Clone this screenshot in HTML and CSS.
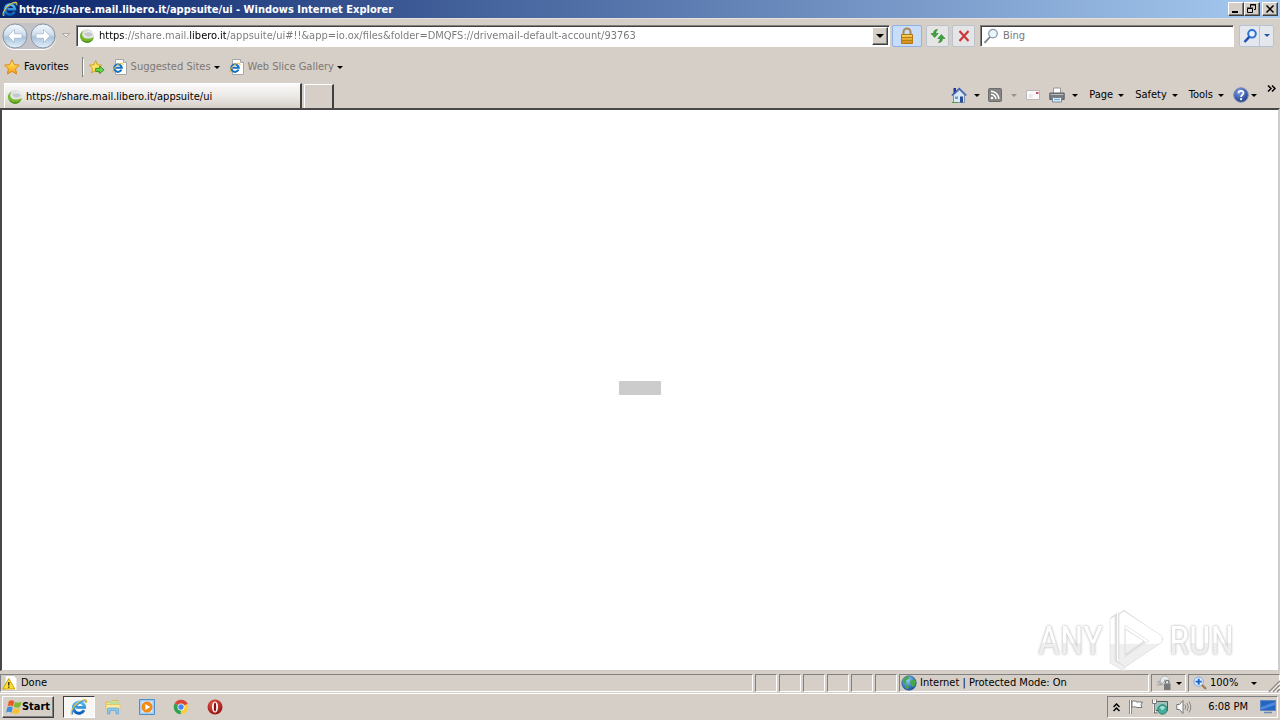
FILE: index.html
```html
<!DOCTYPE html>
<html lang="en">
<head>
<meta charset="utf-8">
<title>https://share.mail.libero.it/appsuite/ui - Windows Internet Explorer</title>
<link rel="stylesheet" href="styles.css">
</head>
<body>
<svg class="defs" aria-hidden="true">
  <defs>
    <linearGradient id="gGlass" x1="0" y1="0" x2="0" y2="1"><stop offset="0" stop-color="#f4f8fc"/><stop offset=".45" stop-color="#cfdeec"/><stop offset=".55" stop-color="#a9c3dc"/><stop offset="1" stop-color="#e4f2fc"/></linearGradient>
    <linearGradient id="gStar" x1="0" y1="0" x2="0" y2="1"><stop offset="0" stop-color="#fff3a0"/><stop offset=".5" stop-color="#fdc73a"/><stop offset="1" stop-color="#f39a1c"/></linearGradient>
    <linearGradient id="gIe" x1="0" y1="0" x2="0" y2="1"><stop offset="0" stop-color="#5cc4f4"/><stop offset="1" stop-color="#0a5cb8"/></linearGradient>
    <linearGradient id="gLock" x1="0" y1="0" x2="0" y2="1"><stop offset="0" stop-color="#fbd25c"/><stop offset="1" stop-color="#d08a10"/></linearGradient>
    <linearGradient id="gPlay" gradientUnits="userSpaceOnUse" x1="0" y1="2" x2="0" y2="60"><stop offset="0" stop-color="#fff"/><stop offset=".54" stop-color="#fff"/><stop offset=".56" stop-color="#efefef"/><stop offset="1" stop-color="#efefef"/></linearGradient>
    <radialGradient id="gHelp" cx=".4" cy=".3" r=".8"><stop offset="0" stop-color="#7f9fe8"/><stop offset="1" stop-color="#12307f"/></radialGradient>
    <radialGradient id="gGlobe" cx=".4" cy=".3" r=".8"><stop offset="0" stop-color="#8fd0f8"/><stop offset="1" stop-color="#0a3f96"/></radialGradient>
    <radialGradient id="gOpera" cx=".4" cy=".3" r=".8"><stop offset="0" stop-color="#e85a50"/><stop offset="1" stop-color="#8e0a0a"/></radialGradient>
    <symbol id="ie" viewBox="0 0 16 16"><path d="M12.500 10.800A5 5 0 1 1 13 8.300H5.500" fill="none" stroke="url(#gIe)" stroke-width="2.600"/><path d="M2 14.800C-.8 13.400 3 7 8 3.600 12.500.6 15.800.6 14.600 4.200" fill="none" stroke="#f3c33b" stroke-width="1.200"/><path d="M2.800 14.600C.8 13 4 7.600 8.400 4.400 12 2 14.600 1.800 14 4.200" fill="none" stroke="#2f8fdc"/></symbol>
    <symbol id="iepage" viewBox="0 0 16 16"><path d="M3.500 .5h8l3 3v12h-11z" fill="#fff" stroke="#a6a6a6"/><path d="M11.500.5v3h3" fill="#ddd" stroke="#a6a6a6"/><path d="M9.500 10.600A3.800 3.800 0 1 1 9.800 8.700H4" fill="none" stroke="#1771c4" stroke-width="2"/><path d="M1.500 13.500C-.5 12 3.500 6 8 4.500c2-.5 3.500-.2 3 1.500" fill="none" stroke="#e8b62c"/></symbol>
    <symbol id="libero" viewBox="0 0 16 16"><circle cx="8" cy="8" r="7" fill="#e3e3e3"/><path d="M1 6.500A7.100 7.100 0 0 0 15 9C10 11.500 5 11 3.500 8 2.600 6 3.500 4 5 2.300A7 7 0 0 0 1 6.500z" fill="#76b82a"/><path d="M2 11a7 7 0 0 0 12 .5c-4 2.500-8 2.500-12-.5z" fill="#4b8a1e"/><path d="M6 4c2-1.500 6-2 8 1.500-1 2.500-4 3.500-6.500 2.500C5.500 7 5 5.500 6 4z" fill="#c4c8ca"/><path d="M6.500 4.500C9 3 12 3.500 14 5.500" stroke="#fff" fill="none"/></symbol>
    <symbol id="star" viewBox="0 0 16 16"><path d="M8 .8l2.200 4.800 5.200.6-3.800 3.600 1 5.200L8 12.400 3.400 15l1-5.200L.6 6.200l5.200-.6z" fill="url(#gStar)" stroke="#d98a18"/></symbol>
    <symbol id="addstar" viewBox="0 0 18 16"><path d="M7.500.8l2 4.600 5 .6-3.600 3.500 1 5-4.400-2.500L3 14.600l1-5L.6 6l5-.6z" fill="#fde25e" stroke="#cf9a18"/><path d="M7.500 9.500h4.500V7l5 4.200-5 4.200V13H7.500z" fill="#6bd44a" stroke="#2f8f20"/></symbol>
    <symbol id="lock" viewBox="0 0 16 18"><path d="M4.500 8V5a3.500 3.500 0 0 1 7 0v3" fill="none" stroke="#a8885a" stroke-width="2"/><path d="M2.500 7.500h11v9h-11z" fill="url(#gLock)" stroke="#b27a12"/><path d="M3 10.500h10M3 13.500h10" stroke="#b87c10"/></symbol>
    <symbol id="refresh" viewBox="0 0 16 16"><path d="M7.500 1.500C5 1.500 3.500 3 3.500 5.500H1l3.600 4 3.600-4H5.800c0-1.500.6-2.500 1.700-4z" fill="#3fa43c" stroke="#27802a" stroke-width=".6"/><path d="M8.500 14.500c2.500 0 4-1.500 4-4H15l-3.600-4-3.600 4h2.400c0 1.500-.6 2.500-1.700 4z" fill="#3fa43c" stroke="#27802a" stroke-width=".6"/></symbol>
    <symbol id="stop" viewBox="0 0 16 16"><path d="M3.500 3l9 10M12.500 3l-9 10" stroke="#c9383c" stroke-width="2.200"/></symbol>
    <symbol id="glass" viewBox="0 0 16 16"><circle cx="10" cy="5.600" r="4.300" fill="#eaf4fb" stroke="#8497a8" stroke-width="1.200"/><path d="M7 9l-5.500 5.800" stroke="#7a7f86" stroke-width="1.800"/></symbol>
    <symbol id="bluglass" viewBox="0 0 16 16"><circle cx="10" cy="5.800" r="3.800" fill="#e9f3ff" stroke="#2f6fd0" stroke-width="2"/><path d="M7.300 8.800L2.500 14" stroke="#1f4fae" stroke-width="2.500"/></symbol>
    <symbol id="home" viewBox="0 0 16 16"><path d="M2.500 1h2.500v6H2.500z" fill="#2c2f9a"/><path d="M2.500 8L8.500 3l5 5v7.500h-11z" fill="#dce8f4" stroke="#7d91ac"/><path d="M.8 8.500l7.500-7 7 7" fill="none" stroke="#3d63b5" stroke-width="1.600"/><path d="M9 9.500h3v6H9z" fill="#2a4e94"/><path d="M4 9.500h3V12H4z" fill="#5ba3d2"/><path d="M1 15.500h5" stroke="#4e9d43"/></symbol>
    <symbol id="rss" viewBox="0 0 14 14"><rect x=".5" y=".5" width="13" height="13" rx="1" fill="#858585" stroke="#6d6d6d"/><circle cx="4" cy="10" r="1.300" fill="#fff"/><path d="M3 6.200A4.800 4.800 0 0 1 7.800 11M3 3.200A7.800 7.800 0 0 1 10.800 11" fill="none" stroke="#fff" stroke-width="1.500"/></symbol>
    <symbol id="mail" viewBox="0 0 14 10"><path d="M.5.500h13v9H.5z" fill="#fbfafa" stroke="#bcb7b7"/><path d="M10 2h2.500v2H10z" fill="#c94b66"/><path d="M2.500 5h5M2.500 7h4" stroke="#dcd9d9"/></symbol>
    <symbol id="printer" viewBox="0 0 16 16"><path d="M4.500 1h7v6h-7z" fill="#fff" stroke="#999"/><path d="M.8 6h14.400v6.500H.8z" fill="#777b80" stroke="#5d6165"/><path d="M1.500 7.500h13" stroke="#b9bdc1"/><path d="M3.500 10.500h9v4.500h-9z" fill="#eef7ff" stroke="#7a8490"/><path d="M5 12.500h6" stroke="#6fb3e6" stroke-width="1.500"/></symbol>
    <symbol id="help" viewBox="0 0 16 16"><circle cx="8" cy="8" r="7.300" fill="url(#gHelp)" stroke="#7f90b5"/><path d="M5.500 6.200C5.500 3.200 10.600 3.300 10.500 6c0 1.800-2.400 2-2.400 4" fill="none" stroke="#fff" stroke-width="1.700"/><circle cx="8.100" cy="12.200" r="1.100" fill="#fff"/></symbol>
    <symbol id="warn" viewBox="0 0 16 16"><path d="M3 .5h9l3 3v12H3z" fill="#fff" stroke="#c8c8c8"/><path d="M6.800 3.500l6 10.500H.8z" fill="#ffe02e" stroke="#c9a100"/><path d="M6.800 7v3.500M6.800 11.500v1.300" stroke="#222" stroke-width="1.300"/></symbol>
    <symbol id="globe" viewBox="0 0 16 16"><circle cx="8" cy="8" r="7.300" fill="url(#gGlobe)" stroke="#2d5e98" stroke-width=".6"/><path d="M3 4c1-2 3-3 5-2.500L7.500 4 5 5.500 5.500 8 3.500 9 1.500 7zM9 6l4-2 1.800 3-1 4-2.300 1L9.500 9zM5 10l3 1-1 3.500-3-2z" fill="#46a848"/></symbol>
    <symbol id="ghost" viewBox="0 0 16 16"><path d="M.5 7L7 3.500v7z" fill="#aeb0b2"/><circle cx="9" cy="5.500" r="4.500" fill="#e8eaec" stroke="#b2b4b6"/><path d="M1 9.500c4 1.500 7-1 8-5" stroke="#999" fill="none"/><path d="M8 8.500h6.500V15H8z" fill="#77797b"/><path d="M9.500 8.500V7a1.700 1.700 0 0 1 3.400 0v1.500" fill="none" stroke="#77797b" stroke-width="1.300"/></symbol>
    <symbol id="zoomin" viewBox="0 0 14 14"><circle cx="5.700" cy="5.700" r="4.700" fill="#d8ebff" stroke="#7fa9da"/><path d="M5.700 2.700v6M2.700 5.700h6" stroke="#1d5fc0" stroke-width="1.800"/><path d="M9 9l4 4" stroke="#a47a4a" stroke-width="2.200"/></symbol>
    <symbol id="grip" viewBox="0 0 12 12"><path d="M1 12L12 1M5 12l7-7M9 12l3-3" stroke="#8a8580" stroke-width="1.500"/><path d="M2.500 12L12 2.500M6.500 12L12 6.500" stroke="#fff"/></symbol>
    <symbol id="windows" viewBox="0 0 16 16"><path d="M2.800 2.200c1.800-1.200 3.600-1.200 5.400 0L7 7.500c-1.800-1.200-3.600-1.200-5.400 0z" fill="#ea5a24"/><path d="M9 2.700c1.800 1.200 3.800 1.200 6.500 0l-1.300 5.100c-2.200 1.200-4.400 1.200-6.400 0z" fill="#7dba2f"/><path d="M1.300 8.500c1.800-1.200 3.600-1.200 5.400 0l-1.200 5.200c-1.800-1.200-3.600-1.200-5.400 0z" fill="#3c8fd8"/><path d="M7.500 9c1.800 1.200 3.800 1.200 6.500 0l-1.300 5.100c-2.200 1.200-4.400 1.200-6.400 0z" fill="#f7c22c"/></symbol>
    <symbol id="folder" viewBox="0 0 16 16"><path d="M1 3h5l1-1.500h6V9H1z" fill="#f6e08a" stroke="#d9bc58"/><path d="M5 2.500h8.500V8H5z" fill="#bce0a0"/><path d="M1 5.500h14V10H1z" fill="#fbe9a4" stroke="#e2c869"/><path d="M2.500 15v-4.500c0-1 .5-1.500 1.500-1.500h8c1 0 1.500.500 1.500 1.500V15h-2.500v-3.500H5V15z" fill="#8cc8ec" stroke="#5ba3d2" stroke-width=".7"/></symbol>
    <symbol id="wmp" viewBox="0 0 16 16"><path d="M.5.500h15v15H.5z" fill="#a5cdf0" stroke="#4d8ecb"/><path d="M2.500 2.500h11v11h-11z" fill="#d9ebfa"/><circle cx="8" cy="8" r="5.500" fill="#f28a18"/><path d="M6.300 5l5 3-5 3z" fill="#fff"/></symbol>
    <symbol id="chrome" viewBox="0 0 16 16"><path d="M8 8L1.700 4.300A7.300 7.300 0 0 1 14.500 4.700z" fill="#dc4437"/><path d="M8 8l6.500-3.300A7.300 7.300 0 0 1 7.700 15.300z" fill="#fccd3a"/><path d="M8 8l-.3 7.300A7.300 7.300 0 0 1 1.700 4.300z" fill="#30a150"/><path d="M8 4.500h6.400" stroke="#dc4437" stroke-width="1.500"/><circle cx="8" cy="8" r="3.500" fill="#fff"/><circle cx="8" cy="8" r="2.700" fill="#4285f4"/></symbol>
    <symbol id="opera" viewBox="0 0 16 16"><circle cx="8" cy="8" r="7.500" fill="url(#gOpera)"/><ellipse cx="8" cy="8" rx="3" ry="5.500" fill="#fff"/><ellipse cx="8" cy="8" rx="1.200" ry="4.500" fill="#8e1010"/></symbol>
    <symbol id="flag" viewBox="0 0 16 16"><path d="M2.500 1v14" stroke="#777" stroke-width="2.600"/><path d="M2.500 1v14" stroke="#fff"/><path d="M4 2.500c2-1 3.500-.5 5 .5h5.500l-1.500 2.500 1 3H9C7.500 7.500 6 7.500 4 8.500z" fill="#fff" stroke="#777"/></symbol>
    <symbol id="net" viewBox="0 0 16 16"><path d="M3.500 2.500h12v9h-12z" fill="#9cc4bd" stroke="#555"/><path d="M1 1v3h3V1M2.500 4v9" fill="none" stroke="#fff" stroke-width="2.200"/><path d="M.5.500v4h4v-4M2.500 5v9h3" fill="none" stroke="#555" stroke-width=".8"/><circle cx="10.500" cy="10.500" r="4.700" fill="#42ae9c" stroke="#24796c"/><path d="M8 8c2-2 4-1 5 .5L11 11l-2-.5z" fill="#a6dfd4"/></symbol>
    <symbol id="speaker" viewBox="0 0 16 16"><path d="M.8 5.500h2.700l3.500-4v13l-3.500-4H.8z" fill="#fff" stroke="#777"/><path d="M9 5.500q1.500 2.500 0 5M11 4q2.600 4 0 8M13 2.500q3.600 5.500 0 11" fill="none" stroke="#888"/></symbol>
    <symbol id="screen" viewBox="0 0 16 14"><path d="M.5.500h15v10H.5z" fill="#2766c0" stroke="#5d87c0"/><path d="M1 7l14-5v3L1 10z" fill="#4b8ade"/><path d="M4 12.500h8" stroke="#6a8bb6" stroke-width="1.500"/></symbol>
  </defs>
</svg>

<header class="titlebar">
  <svg class="i16"><use href="#ie"/></svg>
  <h1 class="title">https://share.mail.libero.it/appsuite/ui - Windows Internet Explorer</h1>
  <div class="winbtns">
    <button class="winbtn" aria-label="Minimize"><svg viewBox="0 0 12 10"><path d="M2 8h6" stroke="#000" stroke-width="2"/></svg></button>
    <button class="winbtn" aria-label="Restore"><svg viewBox="0 0 12 10"><path d="M4.500 3.500V.500h5v5H8M4 1h6M1.500 4.500h5v4h-5zM1 4h6" fill="none" stroke="#000"/></svg></button>
    <button class="winbtn winclose" aria-label="Close"><svg viewBox="0 0 12 10"><path d="M2.500 1.500l7 7M9.500 1.500l-7 7" stroke="#000" stroke-width="1.500"/></svg></button>
  </div>
</header>

<nav class="navbar" aria-label="Navigation">
  <div class="travel">
    <button class="round" aria-label="Back"><svg viewBox="0 0 26 26"><circle cx="13" cy="13" r="12" fill="url(#gGlass)" stroke="#8796a6"/><path d="M12.500 6.500L6 13l6.500 6.500v-4.300H20v-4.400h-7.500z" fill="#fff" stroke="#9fb4c8" stroke-width=".7"/></svg></button>
    <button class="round" aria-label="Forward"><svg viewBox="0 0 26 26"><circle cx="13" cy="13" r="12" fill="url(#gGlass)" stroke="#8796a6"/><path d="M13.500 6.500L20 13l-6.500 6.500v-4.300H6v-4.400h7.500z" fill="#fff" stroke="#9fb4c8" stroke-width=".7"/></svg></button>
  </div>
  <button class="recent" aria-label="Recent pages"><svg viewBox="0 0 8 5"><path d="M.5.500h7L4 4z" fill="#eee" stroke="#aaa6a0"/></svg></button>
  <div class="field address">
    <svg class="i16"><use href="#libero"/></svg>
    <input class="url" type="text" aria-label="Address" value="https://share.mail.libero.it/appsuite/ui#!!&amp;app=io.ox/files&amp;folder=DMQFS://drivemail-default-account/93763">
    <button class="dropbtn" aria-label="Show address list"><i class="arrow big"></i></button>
  </div>
  <button class="tool secure" aria-label="Security report"><svg class="i18"><use href="#lock"/></svg></button>
  <button class="tool" aria-label="Refresh"><svg class="i16"><use href="#refresh"/></svg></button>
  <button class="tool" aria-label="Stop"><svg class="i16"><use href="#stop"/></svg></button>
  <div class="field search">
    <svg class="i16"><use href="#glass"/></svg>
    <input class="query" type="text" aria-label="Search" placeholder="Bing">
  </div>
  <div class="split">
    <button class="go" aria-label="Search"><svg class="i16"><use href="#bluglass"/></svg></button>
    <button class="more" aria-label="Search options"><i class="arrow blue"></i></button>
  </div>
</nav>

<nav class="favbar" aria-label="Favorites">
  <button class="plain favs"><svg class="i16"><use href="#star"/></svg>Favorites</button>
  <button class="plain add" aria-label="Add to Favorites Bar"><svg class="i16"><use href="#addstar"/></svg></button>
  <button class="plain muted"><svg class="i16"><use href="#iepage"/></svg>Suggested Sites<i class="arrow"></i></button>
  <button class="plain muted"><svg class="i16"><use href="#iepage"/></svg>Web Slice Gallery<i class="arrow"></i></button>
</nav>

<div class="tabrow">
  <button class="tab"><svg class="i16"><use href="#libero"/></svg>https://share.mail.libero.it/appsuite/ui</button>
  <button class="newtab" aria-label="New Tab"></button>
  <div class="commands">
    <button class="plain cmd home" aria-label="Home"><svg class="i16"><use href="#home"/></svg><i class="arrow"></i></button>
    <button class="plain cmd feeds" aria-label="Feeds"><svg class="i14"><use href="#rss"/></svg><i class="arrow dim"></i></button>
    <button class="plain cmd" aria-label="Read mail"><svg class="envelope"><use href="#mail"/></svg></button>
    <button class="plain cmd print" aria-label="Print"><svg class="i16"><use href="#printer"/></svg><i class="arrow"></i></button>
    <button class="plain word">Page<i class="arrow"></i></button>
    <button class="plain word">Safety<i class="arrow"></i></button>
    <button class="plain word">Tools<i class="arrow"></i></button>
    <button class="plain helpbtn" aria-label="Help"><svg class="i16"><use href="#help"/></svg><i class="arrow"></i></button>
    <button class="plain overflow" aria-label="More commands"><svg viewBox="0 0 9 7"><path d="M1 .5l3 3-3 3M5 .5l3 3-3 3" fill="none" stroke="#000" stroke-width="1.500"/></svg></button>
  </div>
</div>

<main class="page">
  <div class="loader" role="progressbar" aria-label="Loading"></div>
</main>

<footer class="status">
  <div class="cell message"><svg class="i16"><use href="#warn"/></svg>Done</div>
  <div class="cell slot"></div><div class="cell slot"></div><div class="cell slot"></div><div class="cell slot"></div><div class="cell slot"></div><div class="cell slot"></div>
  <div class="cell zone"><svg class="i16"><use href="#globe"/></svg>Internet | Protected Mode: On</div>
  <button class="cell filter" aria-label="InPrivate Filtering"><svg class="i16"><use href="#ghost"/></svg><i class="arrow"></i></button>
  <button class="cell zoom"><svg class="i14"><use href="#zoomin"/></svg>100%<i class="arrow"></i></button>
  <svg class="grip"><use href="#grip"/></svg>
</footer>

<footer class="taskbar">
  <button class="start"><svg class="i16"><use href="#windows"/></svg>Start</button>
  <button class="task active" aria-label="Internet Explorer"><svg class="i18"><use href="#ie"/></svg></button>
  <button class="task" aria-label="Windows Explorer"><svg class="i16"><use href="#folder"/></svg></button>
  <button class="task" aria-label="Media Player"><svg class="i16"><use href="#wmp"/></svg></button>
  <button class="task" aria-label="Chrome"><svg class="i16"><use href="#chrome"/></svg></button>
  <button class="task" aria-label="Opera"><svg class="i16"><use href="#opera"/></svg></button>
  <div class="tray">
    <button class="plain up" aria-label="Show hidden icons"><svg viewBox="0 0 7 9"><path d="M.5 4l3-3 3 3M.5 8l3-3 3 3" fill="none" stroke="#000" stroke-width="1.500"/></svg></button>
    <svg class="i16"><use href="#flag"/></svg>
    <svg class="i16"><use href="#net"/></svg>
    <svg class="i16"><use href="#speaker"/></svg>
    <time class="clock">6:08 PM</time>
    <button class="plain" aria-label="Show desktop"><svg class="i16"><use href="#screen"/></svg></button>
  </div>
</footer>

<div class="watermark">
  <span class="mark">ANY</span>
  <svg class="play" viewBox="0 0 58 62"><path d="M4 8l5-3v46l9 5 33-22 4-5-4-4L17 1l-5 3v45M19 20v25l18-13z" fill="none" stroke="#dcdcdc" stroke-width="2"/><path fill="url(#gPlay)" stroke="#e2e2e2" stroke-width=".8" fill-rule="evenodd" d="M3 9l5-3v45l10 6-1 4L3 53zM12 4l5-3 38 25v6L18 57l-6-5zM18 15v32l24-16zM18 19l19 12-19 13z"/></svg>
  <span class="mark">RUN</span>
</div>
</body>
</html>
```
FILE: styles.css
```css
* { box-sizing: border-box; }

body {
  --face: #d6cfc8;
  margin: 0;
  height: 100vh;
  display: flex;
  flex-direction: column;
  overflow: hidden;
  background: var(--face);
  color: #000;
  font: 11px/14px Tahoma, "DejaVu Sans Condensed", "DejaVu Sans", sans-serif;
}

button, input { font: inherit; color: inherit; padding: 0; border: 0; border-radius: 0; background: none; }
button { display: flex; align-items: center; justify-content: center; }
svg { flex: none; display: block; }
.defs { position: absolute; width: 0; height: 0; }
.i14 { width: 14px; height: 14px; }
.i16 { width: 16px; height: 16px; }
.i18 { width: 18px; height: 18px; }

.arrow { flex: none; border: 3px solid transparent; border-top-color: #000; border-bottom-width: 0; }
.arrow.big { border-width: 4px 4px 0; }
.arrow.dim { border-top-color: #96908a; }
.arrow.blue { border-top-color: #2456a8; }

.titlebar {
  display: flex;
  align-items: center;
  gap: 1px;
  height: 18px;
  padding: 0 2px;
  background: linear-gradient(90deg, #0a246a, #a6caf0);
}
.title { flex: 1; margin: 0; padding-top: 1px; color: #fff; font-size: 11px; font-weight: bold; white-space: nowrap; }
.winbtns { display: flex; }
.winbtn {
  width: 16px;
  height: 14px;
  background: var(--face);
  border: 1px solid;
  border-color: #fff #404040 #404040 #fff;
  box-shadow: inset -1px -1px #808080;
}
.winbtn svg { width: 12px; height: 10px; }
.winclose { margin-left: 2px; }

.navbar { display: flex; align-items: center; height: 34px; padding: 0 6px 0 2px; border-top: 1px solid #e4e0dc; }
.travel { display: flex; gap: 2px; border-radius: 14px; background: #c4c2c6; box-shadow: 0 1px #fff; }
.round svg { width: 26px; height: 26px; }
.recent { width: 20px; }
.recent svg { width: 8px; height: 5px; }
.field {
  display: flex;
  align-items: center;
  height: 22px;
  padding: 1px;
  background: #fff;
  border: 1px solid;
  border-color: #808080 #fff #fff #808080;
  box-shadow: inset 1px 1px #404040;
}
.address { flex: 1; margin-right: 2px; }
.address .i16 { margin: 0 4px 0 1px; }
.url {
  flex: 1;
  min-width: 0;
  height: 16px;
  outline: 0;
  color: transparent;
  background: linear-gradient(90deg, #000 25px, #777 25px, #777 90px, #000 90px, #000 127px, #777 127px);
  background-clip: text;
}
.dropbtn {
  width: 16px;
  height: 18px;
  background: var(--face);
  border: 1px solid;
  border-color: #fff #404040 #404040 #fff;
  box-shadow: inset -1px -1px #808080;
}
.tool {
  width: 23px;
  height: 22px;
  margin-right: 3px;
  background: #e6e5e6;
  border: 1px solid #bcc3cc;
  border-radius: 2px;
}
.secure { width: 30px; margin-right: 4px; background: #c9ddf8; border-color: #8fb2e4; }
.search { width: 254px; margin: 0 5px 0 2px; }
.search .i16 { margin: 0 4px 0 1px; }
.query { flex: 1; min-width: 0; outline: 0; }
.query::placeholder { color: #777; opacity: 1; }
.split { display: flex; height: 22px; background: #e4e8ee; border: 1px solid #b8c2d0; border-radius: 2px; }
.go { width: 20px; border-right: 1px solid #b8c2d0; }
.more { width: 13px; }

.favbar { display: flex; align-items: center; height: 30px; padding-left: 4px; }
.plain { white-space: nowrap; }
.favs { gap: 4px; height: 20px; padding-right: 13px; border-right: 1px solid #808080; }
.add { padding: 0 7px 0 5px; border-left: 1px solid #fff; }
.muted { gap: 3px; padding-right: 9px; color: #7c7874; }

.tabrow { display: flex; align-items: flex-end; height: 26px; padding-left: 4px; }
.tab {
  width: 298px;
  height: 25px;
  padding: 1px 0 0 2px;
  gap: 3px;
  justify-content: flex-start;
  background: linear-gradient(#fafafa, #ece9e6 50%, #d6cfc8);
  border: 1px solid #fff;
  border-right: 2px solid #404040;
  border-bottom: 0;
}
.newtab { width: 30px; height: 24px; margin-left: 2px; border: 1px solid #fff; border-right: 2px solid #404040; border-bottom: 0; }
.commands { display: flex; align-items: center; height: 26px; margin-left: auto; padding-right: 4px; }
.cmd { gap: 7px; margin-right: 9px; }
.home { margin-right: 8px; }
.feeds { gap: 9px; }
.envelope { width: 14px; height: 10px; }
.word { gap: 5px; margin-left: 2px; margin-right: 9px; }
.helpbtn { gap: 2px; }
.overflow { align-self: flex-start; padding: 3px 0 0 10px; }
.overflow svg { width: 9px; height: 7px; }

.page {
  flex: 1;
  display: flex;
  align-items: center;
  justify-content: center;
  padding-bottom: 4px;
  background: #fff;
  border: 2px solid #484848;
  border-right-color: #d0ccc8;
  border-bottom: 1px solid #d0ccc8;
}
.loader { width: 42px; height: 14px; border-radius: 1px; background: #ccc; }

.status { position: relative; display: flex; gap: 2px; height: 23px; padding: 3px 0 1px; border-bottom: 1px solid #fff; }
.cell { display: flex; align-items: center; border: 1px solid; border-color: #808080 #fff #fff #808080; white-space: nowrap; }
.message { flex: 1; gap: 3px; padding-left: 1px; }
.slot { width: 22px; }
.zone { width: 250px; gap: 3px; padding-left: 1px; }
.filter { width: 35px; gap: 4px; }
.zoom { width: 92px; gap: 3px; padding-left: 4px; justify-content: flex-start; }
.zoom .arrow { margin-left: 10px; }
.grip { position: absolute; right: 0; bottom: 1px; width: 12px; height: 12px; }

.taskbar { display: flex; align-items: center; height: 26px; padding: 0 2px; }
.start {
  width: 52px;
  height: 22px;
  margin-right: 9px;
  font-weight: bold;
  border: 1px solid;
  border-color: #fff #404040 #404040 #fff;
  box-shadow: inset -1px -1px #808080;
}
.task { width: 32px; height: 22px; margin-right: 2px; }
.task.active { background: #f8f7f6; border: 1px solid; border-color: #404040 #fff #fff #404040; }
.tray {
  display: flex;
  align-items: center;
  gap: 8px;
  height: 22px;
  margin-left: auto;
  padding: 0 1px 0 5px;
  border: 1px solid;
  border-color: #808080 #fff #fff #808080;
}
.up svg { width: 7px; height: 9px; }
.clock { margin: 0 4px 0 8px; }

.watermark { position: absolute; right: 46px; bottom: 48px; display: flex; align-items: center; gap: 4px; pointer-events: none; }
.mark {
  color: transparent;
  background: linear-gradient(#fff 54%, #eee 54%);
  background-clip: text;
  font: 38px/62px "Liberation Sans Narrow", "Roboto Condensed", sans-serif;
  filter: drop-shadow(0 0 1px #c4c4c4) drop-shadow(0 0 1px #ddd);
}
.play { width: 58px; height: 62px; }
```
